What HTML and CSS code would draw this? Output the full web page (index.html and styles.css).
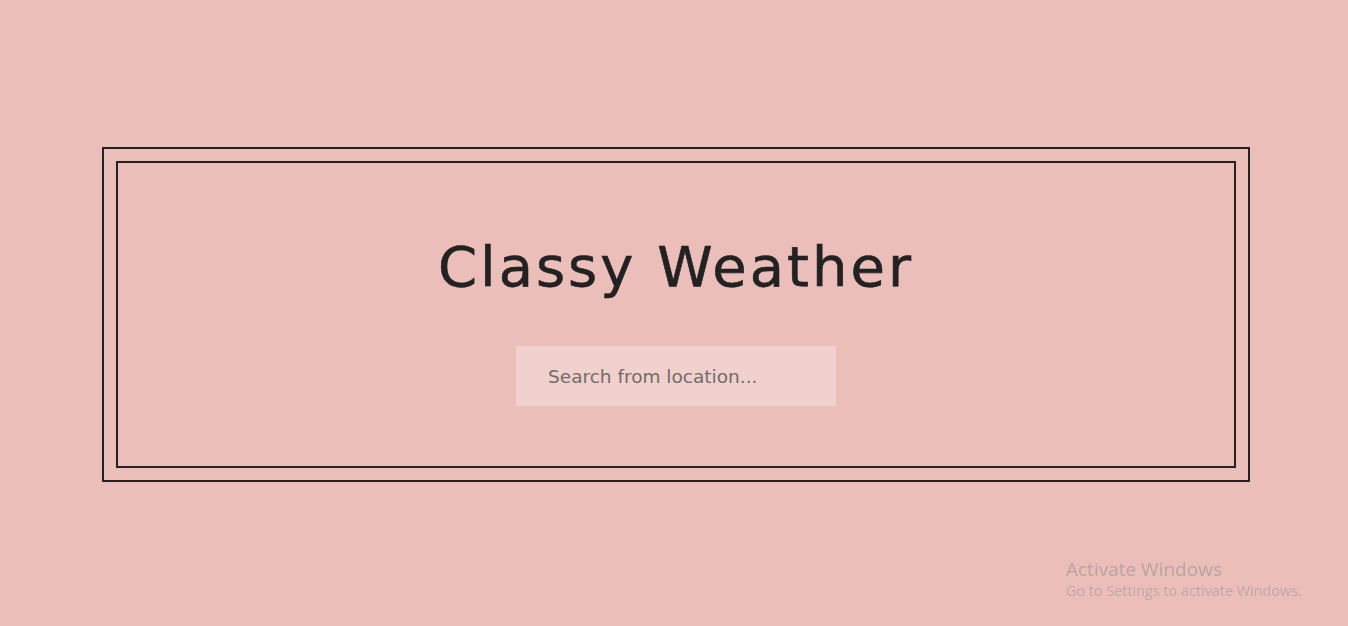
FILE: index.html
```html
<!DOCTYPE html>
<html lang="en">
<head>
<meta charset="utf-8">
<title>Classy Weather</title>
<link rel="stylesheet" href="styles.css">
</head>
<body>
  <div class="frame">
    <div class="app">
      <h1 class="title">Classy Weather</h1>
      <input class="search" type="text" placeholder="Search from location...">
    </div>
  </div>
  <div class="activate">
    <div class="activate-title">Activate Windows</div>
    <div class="activate-sub">Go to Settings to activate Windows.</div>
  </div>
</body>
</html>
```
FILE: styles.css
```css
* { box-sizing: border-box; }
html, body { margin: 0; padding: 0; }
body {
  background: #ebbeb9;
  font-family: "DejaVu Sans", "Open Sans", sans-serif;
  color: #222;
  height: 626px;
  overflow: hidden;
  padding-top: 147px;
}
.frame {
  margin-left: 102px;
  width: 1148px;
  height: 335px;
  border: 2px solid #222;
  padding: 12px;
}
.app {
  height: 100%;
  border: 2px solid #222;
  display: flex;
  flex-direction: column;
  align-items: center;
  padding-top: 64px;
}
.title {
  margin: 0;
  font-weight: 400;
  font-size: 56px;
  line-height: 80px;
  letter-spacing: 3px;
  -webkit-text-stroke: 0.6px #222;
}
.search {
  margin-top: 39px;
  width: 320px;
  height: 60px;
  border: none;
  outline: none;
  background: #f0d1cd;
  padding: 0 32px;
  font-family: inherit;
  font-size: 18.5px;
  color: #222;
}
.search::placeholder { color: #736b6b; }
.activate {
  position: fixed;
  left: 1066px;
  top: 557px;
  color: #b8a4a2;
  font-family: "Open Sans", sans-serif;
}
.activate-title { font-size: 19px; line-height: 24px; }
.activate-sub { font-size: 14.4px; line-height: 20px; color: #bea9a7; }
```
